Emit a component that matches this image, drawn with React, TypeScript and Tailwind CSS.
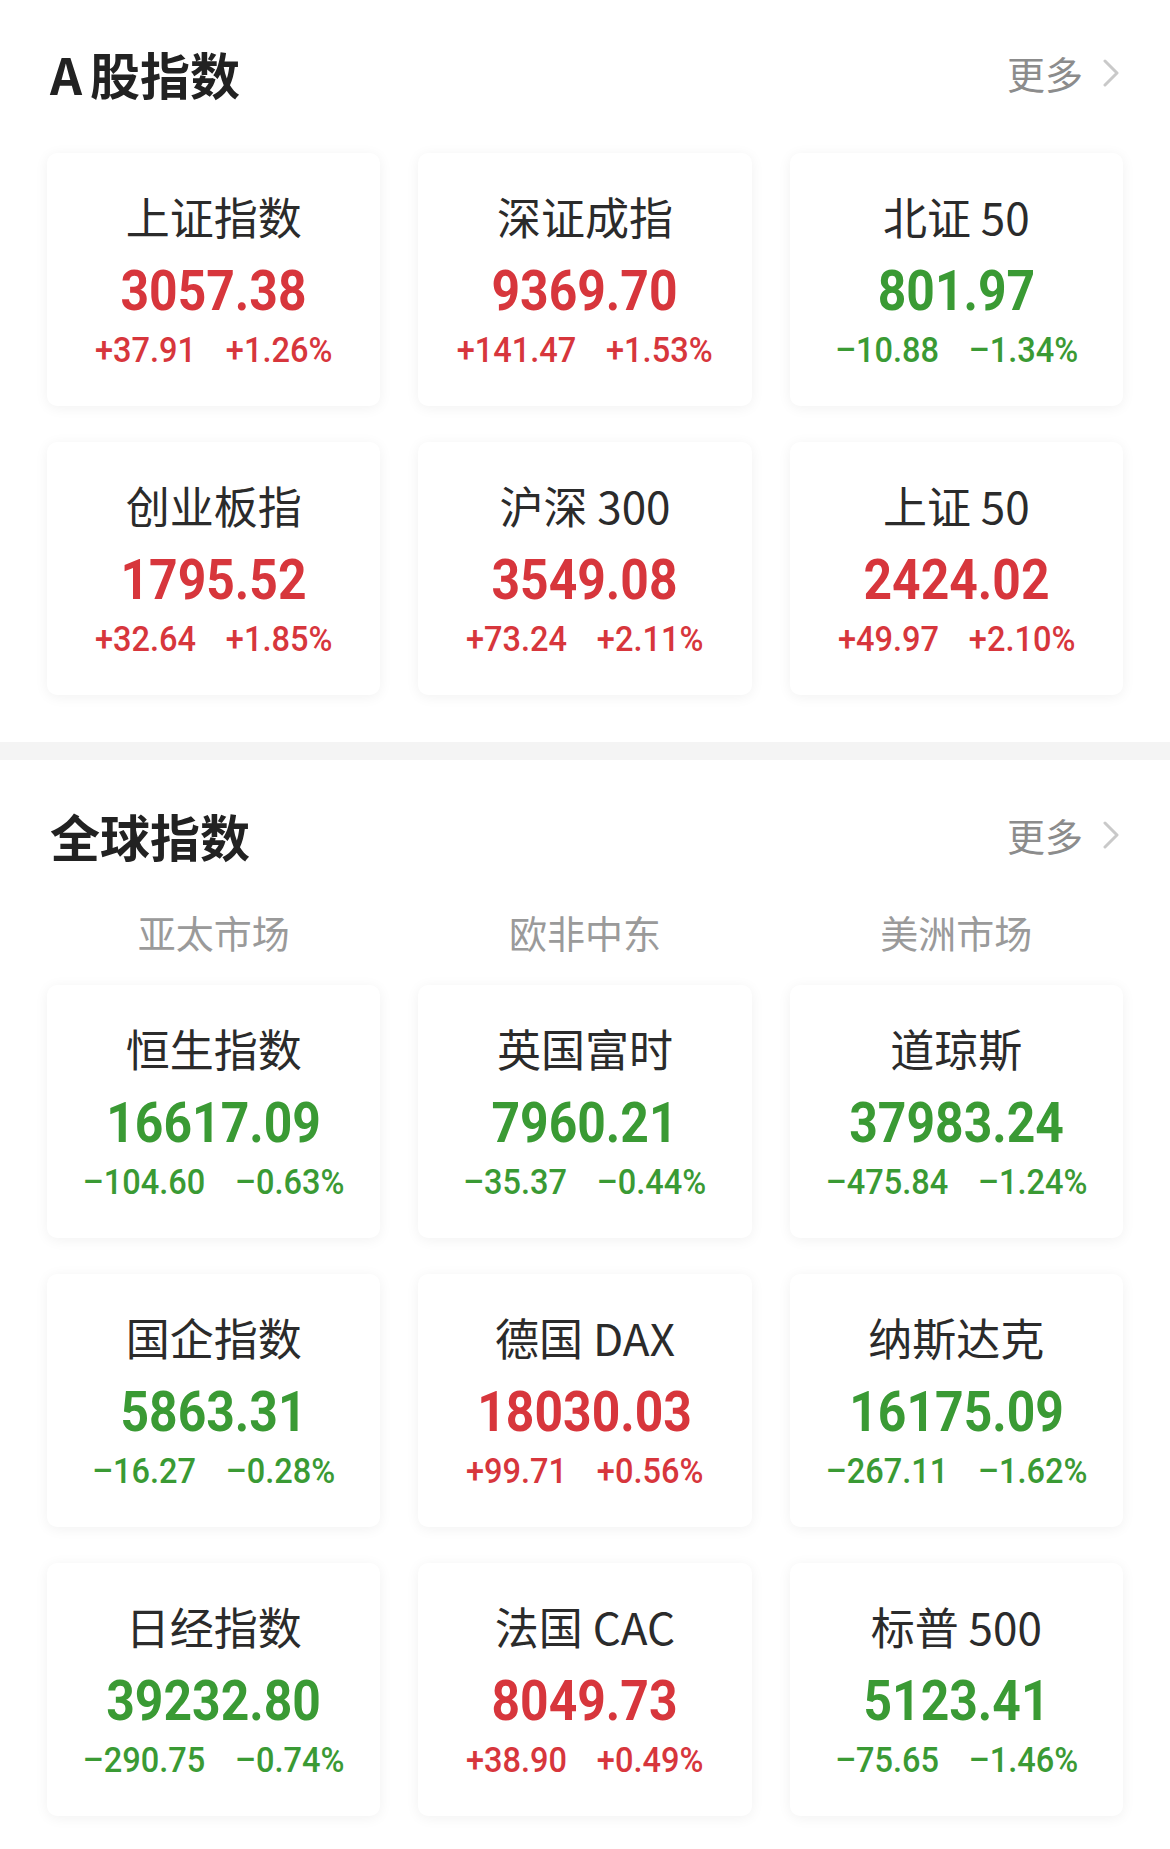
import React from 'react';

type Quote = {
  name: string;
  price: string;
  change: string;
  pct: string;
};

const aShares: Quote[] = [
  { name: '上证指数', price: '3057.38', change: '+37.91', pct: '+1.26%' },
  { name: '深证成指', price: '9369.70', change: '+141.47', pct: '+1.53%' },
  { name: '北证 50', price: '801.97', change: '–10.88', pct: '–1.34%' },
  { name: '创业板指', price: '1795.52', change: '+32.64', pct: '+1.85%' },
  { name: '沪深 300', price: '3549.08', change: '+73.24', pct: '+2.11%' },
  { name: '上证 50', price: '2424.02', change: '+49.97', pct: '+2.10%' },
];

const globalIndexes: Quote[] = [
  { name: '恒生指数', price: '16617.09', change: '–104.60', pct: '–0.63%' },
  { name: '英国富时', price: '7960.21', change: '–35.37', pct: '–0.44%' },
  { name: '道琼斯', price: '37983.24', change: '–475.84', pct: '–1.24%' },
  { name: '国企指数', price: '5863.31', change: '–16.27', pct: '–0.28%' },
  { name: '德国 DAX', price: '18030.03', change: '+99.71', pct: '+0.56%' },
  { name: '纳斯达克', price: '16175.09', change: '–267.11', pct: '–1.62%' },
  { name: '日经指数', price: '39232.80', change: '–290.75', pct: '–0.74%' },
  { name: '法国 CAC', price: '8049.73', change: '+38.90', pct: '+0.49%' },
  { name: '标普 500', price: '5123.41', change: '–75.65', pct: '–1.46%' },
];

const cjk = { fontFamily: '"Noto Sans CJK SC", "Noto Sans", sans-serif' };
const num = { fontFamily: 'Roboto, "Liberation Sans", sans-serif' };

const SectionHeader = ({ lead, rest }: { lead: string; rest: string }) => (
  <div className="flex h-[66px] items-center justify-between">
    <h2 className="flex pl-[3px] text-[50px] font-bold leading-none text-[#222]">
      <span>{lead}</span>
      <span className={lead === 'A' ? 'ml-[8px]' : ''}>{rest}</span>
    </h2>
    <div className="flex items-center gap-[20px] pr-[4px]">
      <span className="text-[38px] leading-none text-[#8c8c8c]">更多</span>
      <svg width="16" height="28" viewBox="0 0 16 28" fill="none">
        <path d="M2 2 L14 14 L2 26" stroke="#c9c9c9" strokeWidth="3" strokeLinecap="round" strokeLinejoin="round" />
      </svg>
    </div>
  </div>
);

const QuoteCard = ({ q }: { q: Quote }) => {
  const up = q.change.startsWith('+');
  const color = up ? 'text-[#d7363c]' : 'text-[#3a9a34]';
  return (
    <div className="flex h-[253px] flex-col items-center rounded-[10px] bg-white pt-[38px] shadow-[0_2px_14px_rgba(0,0,0,0.06)]">
      <div className="h-[50px] text-[44px] leading-[50px] text-[#2b2b2b]">{q.name}</div>
      <div className={`mt-[20px] h-[60px] leading-[60px] ${color}`} style={num}>
        <span className="inline-block scale-x-[0.89] text-[56px] font-bold">{q.price}</span>
      </div>
      <div className={`mt-[10px] h-[40px] leading-[40px] ${color}`} style={num}>
        <span className="inline-flex scale-x-[0.93] gap-[32px] text-[35px] font-medium">
          <span>{q.change}</span>
          <span>{q.pct}</span>
        </span>
      </div>
    </div>
  );
};

export default function App() {
  return (
    <div className="h-[1849px] w-[1170px] overflow-hidden bg-white" style={cjk}>
      <section className="px-[47px] pt-[40px]">
        <SectionHeader lead="A" rest="股指数" />
        <div className="mt-[47px] grid grid-cols-3 gap-x-[38px] gap-y-[36px]">
          {aShares.map((q) => (
            <QuoteCard key={q.name} q={q} />
          ))}
        </div>
      </section>

      <div className="mt-[47px] h-[18px] bg-[#f4f4f4]" />

      <section className="px-[47px] pt-[42px]">
        <SectionHeader lead="全" rest="球指数" />
        <div className="mt-[39px] grid h-[50px] grid-cols-3 gap-x-[38px]">
          {['亚太市场', '欧非中东', '美洲市场'].map((t) => (
            <div key={t} className="text-center text-[38px] leading-[50px] text-[#9a9a9a]">
              {t}
            </div>
          ))}
        </div>
        <div className="mt-[28px] grid grid-cols-3 gap-x-[38px] gap-y-[36px]">
          {globalIndexes.map((q) => (
            <QuoteCard key={q.name} q={q} />
          ))}
        </div>
      </section>
    </div>
  );
}
